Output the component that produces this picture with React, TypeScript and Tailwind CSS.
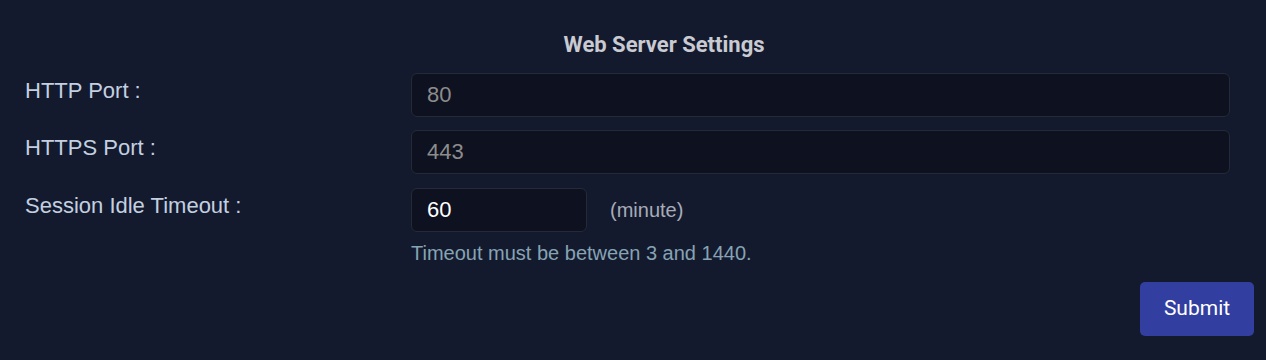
export default function App() {
  return (
    <div className="min-h-[360px] w-full bg-[#141a2e] px-[25px] pt-[28px] font-['Liberation_Sans',Arial,sans-serif]">
      <h2 className="mb-[12px] pl-[62px] text-center font-['Roboto',sans-serif] text-[22px] font-bold leading-[33px] text-[#c9cad2]">
        Web Server Settings
      </h2>

      <div className="flex flex-col gap-[13px] pr-[11px]">
        <div className="flex items-start">
          <label className="w-[386px] pt-[1px] text-[22px] leading-[33px] text-[#c3d0e0]">HTTP Port :</label>
          <input
            defaultValue="80"
            className="h-[44px] flex-1 rounded-[6px] border border-[#262a36] bg-[#0e111f] px-[15px] text-[22px] text-[#8c8c8c] outline-none"
          />
        </div>

        <div className="flex items-start">
          <label className="w-[386px] pt-[1px] text-[22px] leading-[33px] text-[#c3d0e0]">HTTPS Port :</label>
          <input
            defaultValue="443"
            className="h-[44px] flex-1 rounded-[6px] border border-[#262a36] bg-[#0e111f] px-[15px] text-[22px] text-[#8c8c8c] outline-none"
          />
        </div>

        <div className="mt-[1px] flex items-start">
          <label className="w-[386px] pt-[1px] text-[22px] leading-[33px] text-[#c3d0e0]">Session Idle Timeout :</label>
          <div className="flex flex-col">
            <div className="flex items-center gap-[23px]">
              <input
                defaultValue="60"
                className="h-[44px] w-[176px] rounded-[6px] border border-[#262a36] bg-[#0e111f] px-[15px] text-[22px] text-white outline-none"
              />
              <span className="text-[20px] text-[#a8acb8]">(minute)</span>
            </div>
            <p className="mt-[6px] text-[20px] leading-[30px] text-[#86a3b4]">Timeout must be between 3 and 1440.</p>
          </div>
        </div>
      </div>

      <div className="-mr-[13px] mt-[14px] flex justify-end">
        <button className="h-[54px] w-[114px] rounded-[5px] bg-[#323ea0] font-['Roboto',sans-serif] text-[21px] text-white">
          Submit
        </button>
      </div>
    </div>
  );
}
